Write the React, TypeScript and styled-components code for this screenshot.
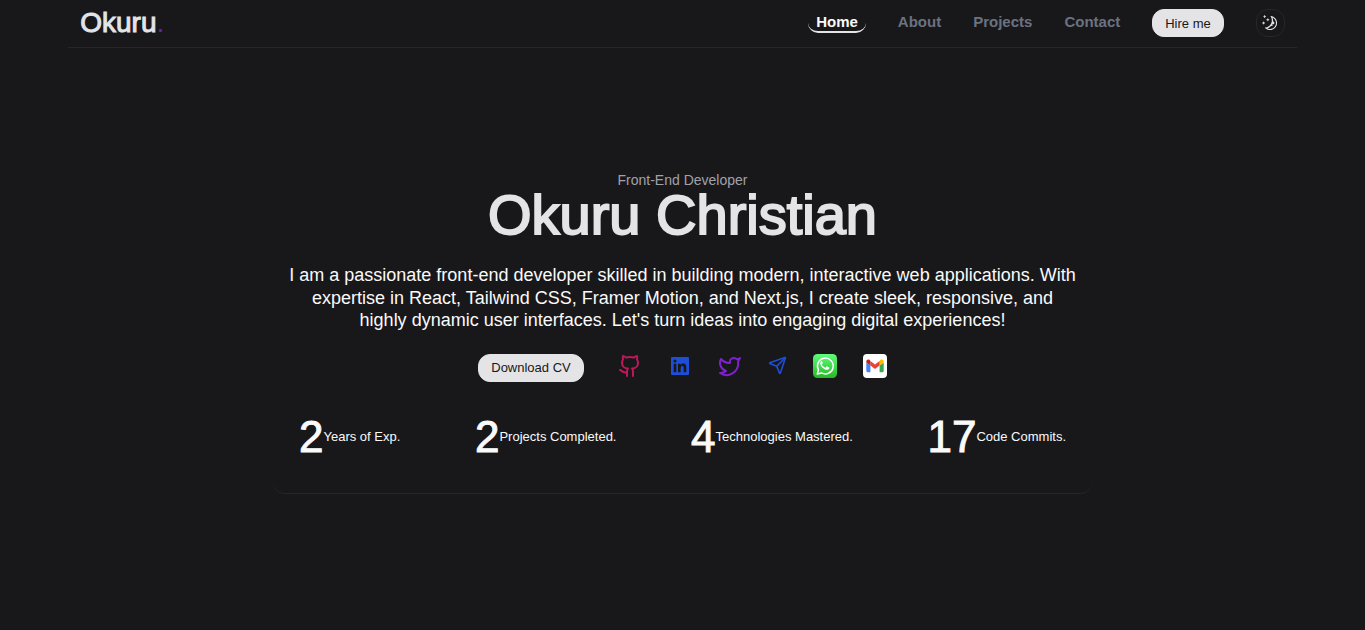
import React from "react";
import styled, { createGlobalStyle } from "styled-components";
import { LuGithub, LuSend, LuTwitter } from "react-icons/lu";
import { BiLogoLinkedinSquare } from "react-icons/bi";
import { RxMoon } from "react-icons/rx";

const GlobalStyle = createGlobalStyle`
  * {
    box-sizing: border-box;
  }
  body {
    margin: 0;
    background: #18181b;
    color: #fafafa;
    font-family: "Liberation Sans", Arial, sans-serif;
  }
`;

const Header = styled.header`
  display: flex;
  align-items: center;
  justify-content: space-between;
  width: 90%;
  min-height: 48px;
  margin: 0 auto;
  padding: 0 12px 1px;
  border-bottom: 1px solid #27272a;
`;

const Logo = styled.a`
  color: #e4e4e7;
  font-size: 28px;
  line-height: 32px;
  text-decoration: none;
  -webkit-text-stroke: 1px currentColor;
`;

const LogoDot = styled.span`
  color: #6b21a8;
  -webkit-text-stroke: 0;
`;

const Nav = styled.nav`
  display: flex;
  align-items: center;
  gap: 32px;
`;

const NavLink = styled.a<{ $active?: boolean }>`
  padding: ${(p) => (p.$active ? "0 8px" : "0")};
  border-bottom: 2px solid ${(p) => (p.$active ? "#e4e4e7" : "transparent")};
  border-radius: ${(p) => (p.$active ? "10px" : "0")};
  color: ${(p) => (p.$active ? "#fafafa" : "#6b7280")};
  font-size: 15px;
  font-weight: 700;
  line-height: 18px;
  text-decoration: none;
`;

const PillButton = styled.button`
  height: 28px;
  padding: 0 12px;
  border: 1px solid #e4e4e7;
  border-radius: 12px;
  background: #e4e4e7;
  color: #18181b;
  font-family: inherit;
  font-size: 13px;
  cursor: pointer;
`;

const ThemeButton = styled.button`
  display: flex;
  align-items: center;
  justify-content: center;
  width: 29px;
  height: 28px;
  padding: 0;
  border: 1px solid #27272a;
  border-radius: 12px;
  background: transparent;
  color: #e4e4e7;
  cursor: pointer;
`;

const Hero = styled.main`
  display: flex;
  flex-direction: column;
  align-items: center;
  width: 60%;
  margin: 124px auto 0;
  padding: 0 16px 32px;
  border-bottom: 1px solid #27272a;
  border-radius: 12px;
  text-align: center;
`;

const Role = styled.p`
  margin: 0;
  color: #a1a1aa;
  font-size: 14px;
  line-height: 16px;
`;

const Name = styled.h1`
  margin: 0;
  color: #e4e4e7;
  font-size: 56px;
  font-weight: 400;
  line-height: 54px;
  -webkit-text-stroke: 2px currentColor;
`;

const Intro = styled.p`
  margin: 22px 0;
  font-size: 18px;
  line-height: 1.25;
`;

const Actions = styled.div`
  display: flex;
  align-items: flex-start;
  gap: 34px;
`;

const Socials = styled.div`
  display: flex;
  align-items: center;
  gap: 26px;
`;

const SocialLink = styled.a<{ $color?: string }>`
  display: flex;
  color: ${(p) => p.$color || "inherit"};
`;

const Stats = styled.div`
  display: flex;
  flex-wrap: wrap;
  justify-content: space-between;
  align-self: stretch;
  margin-top: 31px;
  padding: 0 10px;
`;

const Stat = styled.div`
  display: flex;
  align-items: center;
`;

const StatNumber = styled.span`
  font-size: 44px;
  line-height: 48px;
  -webkit-text-stroke: 1px currentColor;
`;

const StatLabel = styled.span`
  font-size: 13px;
  line-height: 16px;
`;

const WhatsAppIcon = () => (
  <svg width="24" height="24" viewBox="0 0 24 24" aria-hidden="true">
    <defs>
      <linearGradient id="whatsapp-green" x1="0" y1="0" x2="0" y2="1">
        <stop offset="0" stopColor="#5ffc7b" />
        <stop offset="1" stopColor="#28b826" />
      </linearGradient>
    </defs>
    <rect width="24" height="24" rx="4.5" fill="url(#whatsapp-green)" />
    <path
      d="M4.3 20l1.15-4.15A7.9 7.9 0 1 1 8.5 18.9z"
      fill="none"
      stroke="#fff"
      strokeWidth="1.5"
      strokeLinejoin="round"
    />
    <path
      d="M9.2 7.6c-.3-.6-.9-.5-1.3-.1-1.1 1.1-.9 2.7.1 4.2 1.3 2 3 3.4 5 4 1.5.5 3.1-.1 3.3-1.6.1-.5 0-.7-.4-.9l-1.7-.8c-.3-.1-.5-.1-.7.2l-.7.9c-.2.2-.4.2-.7.1-1.4-.6-2.5-1.6-3.2-2.9-.1-.3 0-.4.2-.6.3-.3.8-.9.6-1.3z"
      fill="#fff"
    />
  </svg>
);

const GmailIcon = () => (
  <svg width="24" height="24" viewBox="0 0 24 24" aria-hidden="true">
    <rect width="24" height="24" rx="4" fill="#fff" />
    <path d="M3.3 8.4v8.4c0 .8.600 1.400 1.400 1.400h2.700v-6.700z" fill="#4285f4" />
    <path d="M16.600 18.200h2.700c.8 0 1.400-.6 1.400-1.400V8.400l-4.100 3.100z" fill="#34a853" />
    <path d="M16.600 7v4.500l4.100-3.100V7.600c0-1.900-2.100-2.700-3.400-1.700z" fill="#fbbc04" />
    <path d="M7.400 11.500V7L12 10.400 16.600 7v4.500L12 15z" fill="#ea4335" />
    <path d="M3.300 7.600v.8l4.100 3.100V7l-.7-1.100C5.300 4.900 3.300 5.700 3.300 7.600z" fill="#c5221f" />
  </svg>
);

const navItems = ["Home", "About", "Projects", "Contact"];

const socials = [
  { label: "GitHub", color: "#be185d", icon: <LuGithub size={24} /> },
  { label: "LinkedIn", color: "#1d4ed8", icon: <BiLogoLinkedinSquare size={24} /> },
  { label: "Twitter", color: "#7e22ce", icon: <LuTwitter size={24} /> },
  { label: "Telegram", color: "#1d4ed8", icon: <LuSend size={19} /> },
  { label: "WhatsApp", icon: <WhatsAppIcon /> },
  { label: "Gmail", icon: <GmailIcon /> },
];

const stats = [
  { value: 2, label: "Years of Exp." },
  { value: 2, label: "Projects Completed." },
  { value: 4, label: "Technologies Mastered." },
  { value: 17, label: "Code Commits." },
];

export default function App() {
  return (
    <>
      <GlobalStyle />
      <Header>
        <Logo href="#home">
          Okuru<LogoDot>.</LogoDot>
        </Logo>
        <Nav>
          {navItems.map((item) => (
            <NavLink key={item} href={`#${item.toLowerCase()}`} $active={item === "Home"}>
              {item}
            </NavLink>
          ))}
          <PillButton type="button">Hire me</PillButton>
          <ThemeButton type="button" aria-label="Toggle theme">
            <RxMoon size={16} />
          </ThemeButton>
        </Nav>
      </Header>
      <Hero>
        <Role>Front-End Developer</Role>
        <Name>Okuru Christian</Name>
        <Intro>
          I am a passionate front-end developer skilled in building modern, interactive web
          applications. With expertise in React, Tailwind CSS, Framer Motion, and Next.js, I
          create sleek, responsive, and highly dynamic user interfaces. Let's turn ideas into
          engaging digital experiences!
        </Intro>
        <Actions>
          <PillButton type="button">Download CV</PillButton>
          <Socials>
            {socials.map((s) => (
              <SocialLink key={s.label} href={`#${s.label.toLowerCase()}`} aria-label={s.label} $color={s.color}>
                {s.icon}
              </SocialLink>
            ))}
          </Socials>
        </Actions>
        <Stats>
          {stats.map((s) => (
            <Stat key={s.label}>
              <StatNumber>{s.value}</StatNumber>
              <StatLabel>{s.label}</StatLabel>
            </Stat>
          ))}
        </Stats>
      </Hero>
    </>
  );
}
